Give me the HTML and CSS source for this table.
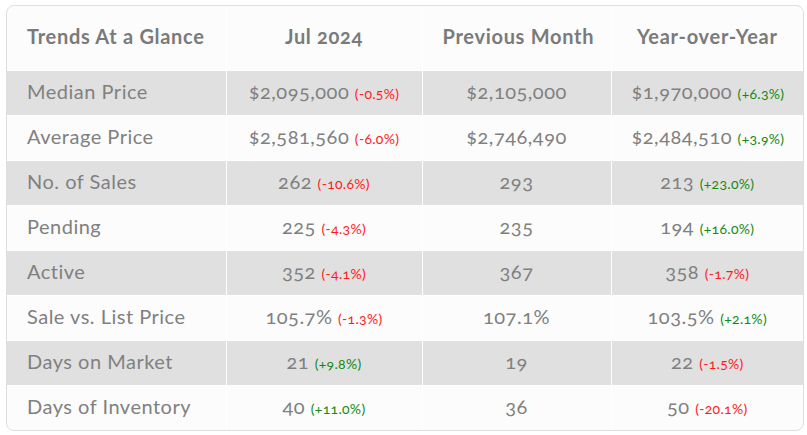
FILE: index.html
```html
<!DOCTYPE html>
<html>
<head>
<meta charset="utf-8">
<link rel="stylesheet" href="styles.css">
</head>
<body>
<div class="card">
<table class="trends">
<colgroup>
<col class="c1"><col class="c2"><col class="c3"><col class="c4">
</colgroup>
<thead>
<tr><th class="label">Trends At a Glance</th><th>Jul 2024</th><th>Previous Month</th><th>Year-over-Year</th></tr>
</thead>
<tbody>
<tr><td class="label">Median Price</td><td>$2,095,000 <span class="neg">(-0.5%)</span></td><td>$2,105,000</td><td>$1,970,000 <span class="pos">(+6.3%)</span></td></tr>
<tr><td class="label">Average Price</td><td>$2,581,560 <span class="neg">(-6.0%)</span></td><td>$2,746,490</td><td>$2,484,510 <span class="pos">(+3.9%)</span></td></tr>
<tr><td class="label">No. of Sales</td><td>262 <span class="neg">(-10.6%)</span></td><td>293</td><td>213 <span class="pos">(+23.0%)</span></td></tr>
<tr><td class="label">Pending</td><td>225 <span class="neg">(-4.3%)</span></td><td>235</td><td>194 <span class="pos">(+16.0%)</span></td></tr>
<tr><td class="label">Active</td><td>352 <span class="neg">(-4.1%)</span></td><td>367</td><td>358 <span class="neg">(-1.7%)</span></td></tr>
<tr><td class="label">Sale vs. List Price</td><td>105.7% <span class="neg">(-1.3%)</span></td><td>107.1%</td><td>103.5% <span class="pos">(+2.1%)</span></td></tr>
<tr><td class="label">Days on Market</td><td>21 <span class="pos">(+9.8%)</span></td><td>19</td><td>22 <span class="neg">(-1.5%)</span></td></tr>
<tr><td class="label">Days of Inventory</td><td>40 <span class="pos">(+11.0%)</span></td><td>36</td><td>50 <span class="neg">(-20.1%)</span></td></tr>
</tbody>
</table>
</div>
</body>
</html>
```
FILE: styles.css
```css
html, body {
  margin: 0;
  padding: 0;
  background: #ffffff;
}
body {
  padding: 5px 0 0 6px;
  font-family: Lato, "Open Sans", sans-serif;
  font-variant-numeric: oldstyle-nums;
}
.card {
  width: 796px;
  border: 1px solid #dedede;
  border-radius: 8px;
  overflow: hidden;
  background: #fcfcfc;
}
.trends {
  width: 796px;
  border-collapse: collapse;
  table-layout: fixed;
}
.c1 { width: 219px; }
.c2 { width: 196px; }
.c3 { width: 189px; }
.c4 { width: 192px; }
.trends th, .trends td {
  border-left: 1px solid #ffffff;
  border-top: 1px solid #ffffff;
  padding: 0 20px 4px 20px;
  text-align: center;
  color: #808080;
  white-space: nowrap;
}
.trends tr > :first-child { border-left: none; }
.trends thead tr > * { border-top: none; }
.trends th {
  height: 60px;
  font-size: 20px;
  font-weight: 700;
  letter-spacing: 0.7px;
  color: #7a7a7a;
}
.trends td {
  height: 40px;
  font-size: 20px;
  letter-spacing: 0.5px;
}
.trends .label { text-align: left; }
.trends tbody tr:nth-child(odd) td { background: #e0e0e0; }
.neg, .pos { font-size: 14px; letter-spacing: 0.3px; }
.neg { color: #ff1a1a; }
.pos { color: #138a13; }
```
